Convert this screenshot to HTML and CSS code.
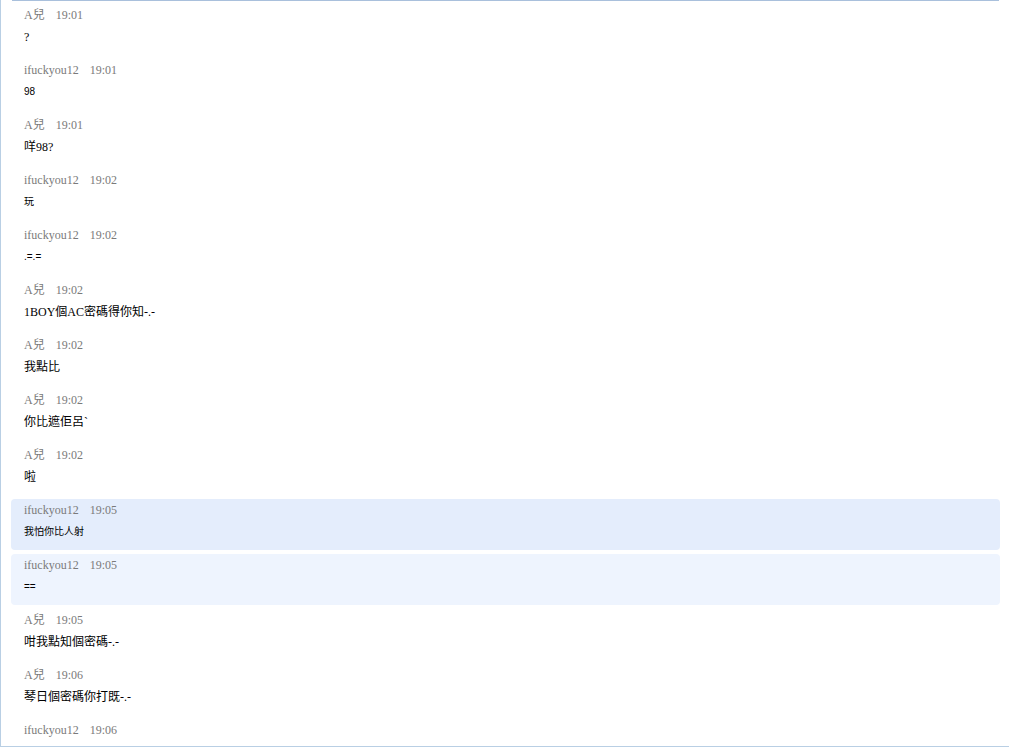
FILE: index.html
```html
<!DOCTYPE html>
<html lang="zh-Hant">
<head>
    <meta charset="UTF-8">
    <title>對話紀錄</title>
    <link rel="stylesheet" href="styles.css">
</head>
<body>
    <div class="chat-frame">
        <div class="top-line"></div>
        <div class="message-list">
            <div class="message">
                <div class="meta"><span class="name">A兒</span><span class="time">19:01</span></div>
                <div class="text">?</div>
            </div>
            <div class="message">
                <div class="meta"><span class="name">ifuckyou12</span><span class="time">19:01</span></div>
                <div class="text small">98</div>
            </div>
            <div class="message">
                <div class="meta"><span class="name">A兒</span><span class="time">19:01</span></div>
                <div class="text">咩98?</div>
            </div>
            <div class="message">
                <div class="meta"><span class="name">ifuckyou12</span><span class="time">19:02</span></div>
                <div class="text small">玩</div>
            </div>
            <div class="message">
                <div class="meta"><span class="name">ifuckyou12</span><span class="time">19:02</span></div>
                <div class="text small">.=.=</div>
            </div>
            <div class="message">
                <div class="meta"><span class="name">A兒</span><span class="time">19:02</span></div>
                <div class="text">1BOY個AC密碼得你知-.-</div>
            </div>
            <div class="message">
                <div class="meta"><span class="name">A兒</span><span class="time">19:02</span></div>
                <div class="text">我點比</div>
            </div>
            <div class="message">
                <div class="meta"><span class="name">A兒</span><span class="time">19:02</span></div>
                <div class="text">你比遮佢呂`</div>
            </div>
            <div class="message">
                <div class="meta"><span class="name">A兒</span><span class="time">19:02</span></div>
                <div class="text">啦</div>
            </div>
            <div class="message selected">
                <div class="meta"><span class="name">ifuckyou12</span><span class="time">19:05</span></div>
                <div class="text small">我怕你比人射</div>
            </div>
            <div class="message hovered">
                <div class="meta"><span class="name">ifuckyou12</span><span class="time">19:05</span></div>
                <div class="text small">==</div>
            </div>
            <div class="message">
                <div class="meta"><span class="name">A兒</span><span class="time">19:05</span></div>
                <div class="text">咁我點知個密碼-.-</div>
            </div>
            <div class="message">
                <div class="meta"><span class="name">A兒</span><span class="time">19:06</span></div>
                <div class="text">琴日個密碼你打既-.-</div>
            </div>
            <div class="message">
                <div class="meta"><span class="name">ifuckyou12</span><span class="time">19:06</span></div>
                <div class="text"></div>
            </div>
        </div>
    </div>
</body>
</html>
```

FILE: styles.css
```css
/* 전체 페이지 */
html, body {
    margin: 0;
    padding: 0;
    background-color: #FFFFFF;
    overflow: hidden;
}
.chat-frame {
    height: 746px;
    border-left: 1px solid #B9CFE4;
    border-bottom: 1px solid #B9CFE4;
    overflow: hidden;
    font-family: "Liberation Serif", "Noto Sans CJK TC", serif;
}
.top-line {
    height: 1px;
    margin: 0 10px 0 11px;
    background-color: #A9C0DC;
}
/* 메시지 목록 */
.message-list {
    display: flex;
    flex-direction: column;
    gap: 4px;
    padding: 3px 9px 0 10px;
}
.message {
    height: 51px;
    box-sizing: border-box;
    padding: 4px 13px 0 13px;
    border-radius: 4px;
}
.message.selected {
    background-color: #E4EDFC;
}
.message.hovered {
    background-color: #EEF4FE;
}
.meta {
    display: flex;
    gap: 11px;
    height: 14px;
    line-height: 14px;
    font-size: 12px;
    color: #7A7A7A;
}
.text {
    margin-top: 7px;
    height: 16px;
    line-height: 16px;
    font-size: 12px;
    color: #000000;
    white-space: nowrap;
}
.text.small {
    font-family: "Liberation Sans", "Noto Sans CJK TC", sans-serif;
    font-size: 10px;
}
```
